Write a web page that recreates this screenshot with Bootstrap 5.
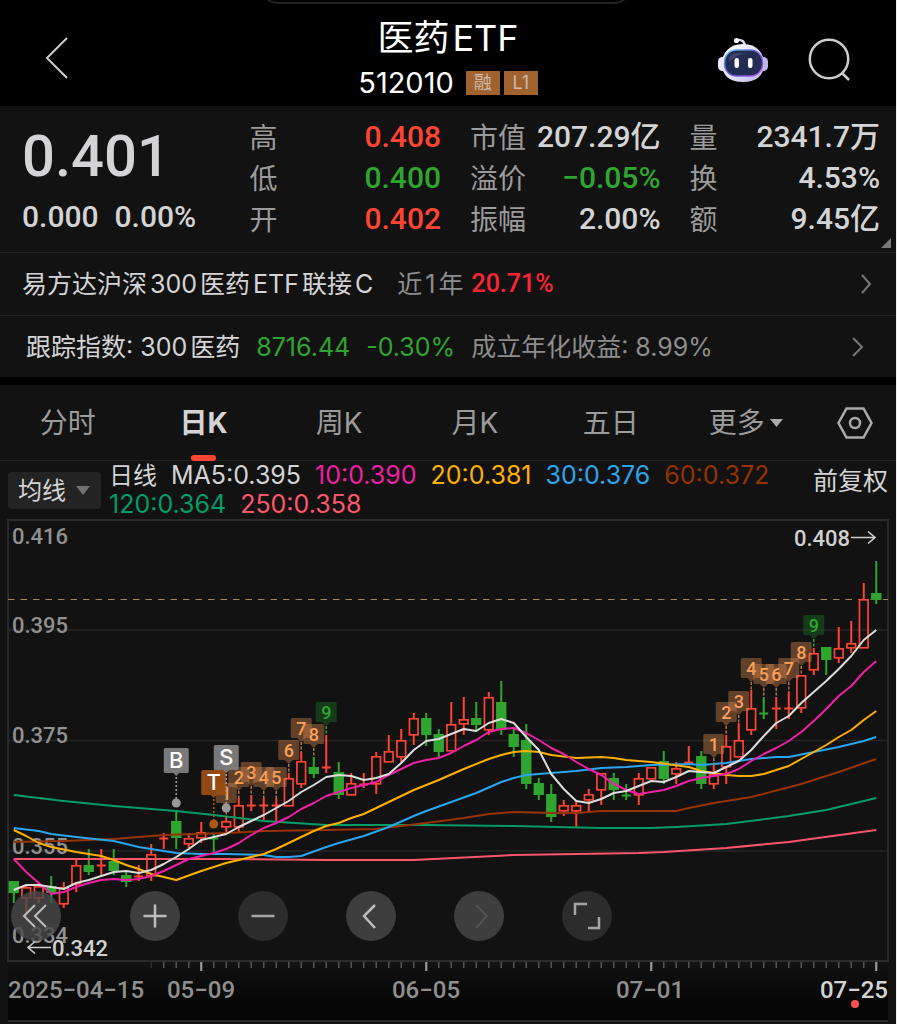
<!DOCTYPE html>
<html lang="zh-CN">
<head>
<meta charset="utf-8">
<meta name="viewport" content="width=device-width, initial-scale=1">
<title>医药ETF 512010</title>
<link href="https://cdn.jsdelivr.net/npm/bootstrap@5.3.0/dist/css/bootstrap.min.css" rel="stylesheet">
<style>
  :root { --panel:#121212; --rule:#232323; --hi:#d4d4d6; --dim:#9b9b9b; --up:#ff4433; --down:#2fa52f; }
  body { background:#000; color:var(--hi); font-family:Inter,"Noto Sans CJK SC",sans-serif; font-size:26px; line-height:1.2; }
  .app { border-right:1px solid #eee; overflow:hidden; }
  .din { font-family:Roboto,"Noto Sans CJK SC",sans-serif; font-weight:500; }
  .panel { background:var(--panel); }
  .bare { background:none; border:0; padding:0; color:inherit; line-height:1; }
  a { color:inherit; text-decoration:none; }
  .up { color:var(--up); } .down { color:var(--down); } .dim { color:var(--dim); }
  .mixed { display:inline-flex; gap:3px; white-space:pre; }

  .topbar { display:grid; grid-template-columns:1fr auto 1fr; height:106px; padding:14px 45px 0 45px; color:#fff; }
  .island { top:-32px; width:372px; height:36px; border:2px solid #222; border-radius:18px; left:50%; margin-left:-188px; }
  .topbar h1 { font-size:36px; font-weight:400; line-height:48px; }
  .code { font-size:29px; line-height:42px; }
  .tag { background:#a0622f; color:#cdbba9; font-size:18px; line-height:24px; width:34px; text-align:center; }

  .quote { display:grid; grid-template-columns:198fr 191fr 190fr 190fr; column-gap:29px; padding:10px 16px 13px 22px; position:relative; border-bottom:1px solid var(--rule); }
  .last { font-size:58px; line-height:80px; }
  .q { font-size:30px; line-height:41px; font-weight:500; }
  .q-label { font-size:28px; font-weight:400; color:var(--dim); font-family:"Noto Sans CJK SC",sans-serif; }
  .fold { right:5px; bottom:4px; }

  .info { height:62px; font-size:25px; padding:0 24px 0 22px; }
  .info + .info { border-top:1px solid var(--rule); }
  .mid { color:#8d8d8d; }

  .tabs { display:grid; grid-template-columns:repeat(6,136fr) 82fr; height:76px; margin-top:8px; border-bottom:1px solid var(--rule); font-size:28px; color:var(--dim); }
  .tabs .bare { height:76px; }
  .tabs .on { color:var(--hi); font-weight:700; position:relative; }
  .tabs .on::after { content:""; position:absolute; left:50%; bottom:0; width:25px; height:6px; margin-left:-13px; border-radius:3px; background:var(--up); }

  .legend { min-height:58px; padding:0 8px; }
  .ma-pick { background:#232323; border-radius:4px; width:93px; height:37px; position:relative; flex:none; margin-top:11px; }
  .ma-pick select { appearance:none; background:none; border:0; color:var(--hi); font-size:24px; line-height:37px; padding:0 0 0 10px; width:100%; height:37px; }
  .ma-pick svg { position:absolute; right:11px; top:14px; pointer-events:none; }
  .ma-list { font-size:25px; line-height:29px; column-gap:14px; }
  .ma-name { font-size:24px; }
  .chart svg.plot { display:block; width:100%; height:auto; }
  .plot text { font-family:Roboto,sans-serif; font-weight:500; font-size:22px; }
  .plot .pin { font-family:Inter,sans-serif; font-weight:500; font-size:22px; fill:#fff; text-anchor:middle; }
  .plot .cnt { font-size:18px; text-anchor:middle; }
  .plot .date { font-size:24px; fill:#8f8f8f; }
  .tools { position:absolute; left:11px; bottom:83px; display:flex; gap:58px; }
  .tools button { width:50px; height:50px; border:0; padding:0; border-radius:50%; background:#3e3e3e; color:#bdbdbd; }
  .tools .far { background:rgba(74,74,74,.8); margin-right:11px; }
  .tools .soft { background:#2c2c2c; color:#a5a5a5; }
  .tools button:disabled { color:#555; }
  .tools svg { display:block; }
</style>
</head>
<body>
<div class="app">
  <header class="topbar position-relative">
    <div class="island position-absolute"></div>
    <div class="d-flex align-items-center pb-1">
      <button class="bare" aria-label="返回"><svg width="24" height="42" viewBox="0 0 24 42" fill="none" stroke="#ccc" stroke-width="2"><path d="M22 1 2 21 22 41"/></svg></button>
    </div>
    <div class="text-center">
      <h1 class="m-0"><span class="mixed"><span>医药</span><span>ETF</span></span></h1>
      <div class="code d-flex align-items-center justify-content-center"><span class="me-2 pe-1">512010</span><span class="tag me-1">融</span><span class="tag">L1</span></div>
    </div>
    <div class="d-flex align-items-center justify-content-end">
      <button class="bare me-4 pe-3" aria-label="智能助手">
        <svg width="50" height="48" viewBox="0 0 50 48">
          <defs>
            <linearGradient id="shell" x1="0" y1="0" x2="1" y2="1"><stop offset="0" stop-color="#fff"/><stop offset=".6" stop-color="#dedcf4"/><stop offset="1" stop-color="#b3aee0"/></linearGradient>
            <linearGradient id="rim" x1="0" y1="0" x2="1" y2="1"><stop offset="0" stop-color="#57c8ea"/><stop offset=".5" stop-color="#6a5bd8"/><stop offset="1" stop-color="#a552ea"/></linearGradient>
          </defs>
          <path d="M19 4q8-1 8 7" fill="none" stroke="#dcdaf2" stroke-width="2.4"/><circle cx="18.500" cy="4.500" r="2.600" fill="#f1f0fb"/>
          <rect x="0" y="21" width="9" height="14" rx="4.500" fill="#e9e8f7"/><rect x="41" y="21" width="9" height="14" rx="4.500" fill="#bdb9e6"/>
          <path d="M25 8C39 8 46 17 46 28S39 46 25 46 4 39 4 28 11 8 25 8Z" fill="url(#shell)"/>
          <rect x="6.500" y="14" width="38" height="26" rx="12" fill="#232c52" stroke="url(#rim)" stroke-width="1.500"/>
          <path d="M11 22q2-5 9-5h9q-10 1-18 9Z" fill="#46507a" opacity=".7"/>
          <rect x="16.500" y="22" width="4.500" height="10" rx="2.200" fill="#fff"/><rect x="30" y="22" width="4.500" height="10" rx="2.200" fill="#fff"/>
        </svg>
      </button>
      <button class="bare" aria-label="搜索"><svg width="43" height="44" viewBox="0 0 43 44" fill="none" stroke="#ccc" stroke-width="2.500"><circle cx="21" cy="21" r="19.200"/><path d="m34 35 7 7"/></svg></button>
    </div>
  </header>

  <section class="quote panel">
    <div class="din">
      <div class="last">0.401</div>
      <div class="q d-flex gap-3"><span>0.000</span><span>0.00%</span></div>
    </div>
    <div class="din q">
      <div class="d-flex justify-content-between"><span class="q-label">高</span><span class="up">0.408</span></div>
      <div class="d-flex justify-content-between"><span class="q-label">低</span><span class="down">0.400</span></div>
      <div class="d-flex justify-content-between"><span class="q-label">开</span><span class="up">0.402</span></div>
    </div>
    <div class="din q">
      <div class="d-flex justify-content-between"><span class="q-label">市值</span><span>207.29亿</span></div>
      <div class="d-flex justify-content-between"><span class="q-label">溢价</span><span class="down">−0.05%</span></div>
      <div class="d-flex justify-content-between"><span class="q-label">振幅</span><span>2.00%</span></div>
    </div>
    <div class="din q">
      <div class="d-flex justify-content-between"><span class="q-label">量</span><span>2341.7万</span></div>
      <div class="d-flex justify-content-between"><span class="q-label">换</span><span>4.53%</span></div>
      <div class="d-flex justify-content-between"><span class="q-label">额</span><span>9.45亿</span></div>
    </div>
    <svg class="fold position-absolute" width="10" height="10"><path d="M10 0V10H0Z" fill="#777"/></svg>
  </section>

  <a href="#fund" class="info panel d-flex align-items-center">
    <span class="mixed"><span>易方达沪深</span><span>300</span><span>医药</span><span>ETF</span><span>联接</span><span>C</span></span><span class="mixed mid ms-4"><span>近</span><span>1</span><span>年</span></span><span class="din ms-2" style="color:#ff2336">20.71%</span>
    <svg class="ms-auto" width="12" height="22" viewBox="0 0 12 22" fill="none" stroke="#777" stroke-width="2"><path d="m2 2 8 9-8 9"/></svg>
  </a>
  <a href="#index" class="info panel d-flex align-items-center">
    <span class="mixed ps-1"><span>跟踪指数: 300</span><span>医药</span></span><span class="down ms-3">8716.44</span><span class="down ms-3">-0.30%</span><span class="mid ms-3">成立年化收益: 8.99%</span>
    <svg class="ms-auto me-2" width="12" height="22" viewBox="0 0 12 22" fill="none" stroke="#777" stroke-width="2"><path d="m1 2 9 9-9 9"/></svg>
  </a>

  <nav class="tabs panel">
    <button class="bare">分时</button>
    <button class="bare on">日K</button>
    <button class="bare">周K</button>
    <button class="bare">月K</button>
    <button class="bare">五日</button>
    <button class="bare d-flex align-items-center justify-content-center">更多<svg class="ms-1" width="15" height="10"><path d="M1 1H14L7.500 9Z" fill="#aaa"/></svg></button>
    <button class="bare" aria-label="设置"><svg width="36" height="32" viewBox="0 0 36 32" fill="none" stroke="#aaa" stroke-width="2.500"><path d="M9.500 1.500H26.500L34.500 16 26.500 30.500H9.500L1.500 16Z"/><circle cx="18" cy="16" r="5"/></svg></button>
  </nav>

  <section class="legend panel d-flex align-items-start">
    <div class="ma-pick me-2"><select aria-label="指标"><option>均线</option></select><svg width="14" height="10"><path d="M0 0H14L7 9Z" fill="#737373"/></svg></div>
    <div class="ma-list d-flex flex-wrap flex-fill">
      <span class="ma-name">日线</span><span>MA5:0.395</span><span style="color:#f020a5">10:0.390</span><span style="color:#ffb000">20:0.381</span><span style="color:#2aa5f0">30:0.376</span><span style="color:#963300">60:0.372</span><span style="color:#009c66">120:0.364</span><span style="color:#ff566c">250:0.358</span>
    </div>
    <button class="bare flex-shrink-0 pt-2" style="font-size:25px">前复权</button>
  </section>

  <section class="chart panel position-relative">
    <svg class="plot" viewBox="0 519 896 505" role="img" aria-label="日K线图">
      <defs><linearGradient id="axisfade" x1="0" y1="0" x2="0" y2="1"><stop offset="0" stop-color="#121212"/><stop offset=".7" stop-color="#060606"/></linearGradient></defs>
      <rect x="8" y="962" width="880" height="58" fill="url(#axisfade)"/>
      <path d="M8 630H888M8 740.500H888M8 851H888" stroke="#262626" stroke-width="1.500"/>
      <path d="M8 520H888V961H8ZM8 1021H888" fill="none" stroke="#2b2b2b" stroke-width="2"/>
      <path d="M8 599.500H888" stroke="#a4875a" stroke-width="1.200" stroke-dasharray="6.500 6"/>
      <g id="candles"></g>
      <g fill="#919191">
        <text x="12" y="544">0.416</text><text x="12" y="633">0.395</text><text x="12" y="743">0.375</text><text x="12" y="854">0.355</text><text x="12" y="943">0.334</text>
      </g>
      <g id="averages" fill="none" stroke-width="2" stroke-linejoin="round"></g>
      <g id="counts"></g>
      <g id="trades"></g>
      <g fill="#d0d0d0" stroke="none">
        <text x="794" y="546">0.408</text><text x="52" y="956">0.342</text>
        <path d="M851 537.500H875M868 531.500l7 6-7 6M51 947.500H28M35 941.500l-7 6 7 6" fill="none" stroke="#d0d0d0" stroke-width="1.600"/>
      </g>
      <g id="ticks"></g>
      <text class="date" x="8" y="998">2025−04−15</text>
      <text class="date" x="201" y="998" text-anchor="middle">05−09</text>
      <text class="date" x="426" y="998" text-anchor="middle">06−05</text>
      <text class="date" x="650" y="998" text-anchor="middle">07−01</text>
      <text class="date" x="888" y="998" text-anchor="end" style="fill:#d4d4d4">07−25</text>
      <circle cx="855" cy="1004" r="4" fill="#ff5252"/>
    </svg>
    <div class="tools">
      <button class="far" aria-label="最早"><svg width="50" height="50" fill="none" stroke="currentColor" stroke-width="2"><path d="M24 14 13 25 24 36M35 14 24 25 35 36"/></svg></button>
      <button aria-label="放大"><svg width="50" height="50" fill="none" stroke="currentColor" stroke-width="2.500"><path d="M13.500 25H36.500M25 13.500V36.500"/></svg></button>
      <button class="soft" aria-label="缩小"><svg width="50" height="50" fill="none" stroke="currentColor" stroke-width="2.500"><path d="M13.500 25H36.500"/></svg></button>
      <button aria-label="向左"><svg width="50" height="50" fill="none" stroke="currentColor" stroke-width="2.500"><path d="M29 14 18 25 29 37"/></svg></button>
      <button disabled aria-label="向右"><svg width="50" height="50" fill="none" stroke="currentColor" stroke-width="2"><path d="M22 14 33 25 22 37"/></svg></button>
      <button class="soft" aria-label="全屏"><svg width="50" height="50" fill="none" stroke="currentColor" stroke-width="2.500"><path d="M13 24V13H25M26 37H37V26"/></svg></button>
    </div>
  </section>
</div>
<script>
const X = i => 13.75 + 12.5 * i;
const RED = '#ff4433', GREEN = '#2fa52f';
const put = (id, html) => { document.getElementById(id).innerHTML = html; };

// one row per trading day: direction, high, body top, body bottom, low
const days = `G 881 881 893 903|R 886 887 898 918|R 882 886 898 903|G 876 886 893 903|R 882 887 904 908|R 860 865 884 892|G 849 865 872 875|R 849 865 865 875|G 849 861 871 875|G 871 875 882 887|R 865 876 876 881|R 844 854 876 881|R 833 838 838 849|G 812 821 838 849|R 833 838 844 848|R 822 832 838 843|G 834 838 838 852|R 817 821 827 832|R 798 805 827 832|R 795 805 805 811|R 798 805 805 820|R 798 805 805 821|R 773 778 806 806|R 752 761 784 788|G 757 767 774 778|R 735 767 767 773|G 762 772 795 799|R 773 783 795 795|R 773 784 784 788|R 752 756 784 794|R 735 751 762 762|R 729 740 757 762|R 713 718 735 745|G 713 718 735 746|G 729 734 752 757|R 702 724 751 751|R 697 719 724 735|G 702 718 725 730|R 692 697 730 735|G 681 702 730 735|G 727 734 747 757|G 724 740 784 789|G 778 783 795 800|G 784 794 817 822|R 800 805 811 816|R 800 805 811 827|R 789 794 800 811|R 773 773 790 805|G 773 778 790 800|G 784 795 795 800|R 773 778 795 805|R 767 767 779 779|G 751 761 779 784|R 762 768 774 784|R 746 762 762 765|G 751 756 784 789|R 765 774 784 789|R 735 746 767 784|R 723 740 757 757|R 690 708 730 735|G 697 713 713 719|R 697 708 708 729|R 692 708 708 719|R 675 675 708 713|R 648 653 670 675|G 647 647 660 675|R 627 648 658 663|R 621 643 648 653|R 583 599 648 648|G 561 593 600 604`
  .split('|').map(r => { const [c, ...v] = r.split(' '); return [c, ...v.map(Number)]; });
put('candles', days.map(([c, h, t, b, l], i) => {
  const x = X(i), col = c === 'R' ? RED : GREEN;
  if (t === b) return `<path d="M${x} ${h}V${l}M${x - 4.5} ${t + .5}h9" stroke="${col}" stroke-width="2" fill="none"/>`;
  if (c === 'G') return `<path d="M${x} ${h}V${l}" stroke="${col}" stroke-width="2"/><rect x="${x - 5.2}" y="${t}" width="10.4" height="${b - t}" fill="${col}"/>`;
  return `<path d="M${x} ${h}V${t}M${x} ${b}V${l}" stroke="${col}" stroke-width="2"/><rect x="${x - 4.3}" y="${t + .8}" width="8.6" height="${b - t - 1}" fill="none" stroke="${col}" stroke-width="1.7"/>`;
}).join(''));

// moving averages as day:height pairs
const lines = {
  '#ff566c': '0:859 10:859 17:859 25:860 32:860 40:855 50:853 52:852 57:848 62:842 69:830',
  '#009c66': '0:795 4:801 8:806 13:811 16:815 20:821 25:825 33:825 40:826 47:828 51:828 53:827 57:824 62:816 65:810 69:798',
  '#963300': '0:842 4:841 8:839 12:835 17:833 20:831 25:830 29:829 31:826 33:823 36:818 38:814 40:812 43:813 45:813 47:811 51:811 53:811 54:808 56:803 59:797 63:784 66:772 69:759',
  '#2aa5f0': '0:828 2:831 3:834 5:837 8:841 9:844 10:847 11:849 13:853 15:854 17:854 20:855 21:857 22:857 23:856 25:847 26:843 28:836 30:827 32:816 33:811 35:802 37:793 39:782 40:778 41:775 43:773 45:771 47:768 49:767 51:765 54:764 55:765 57:763 59:759 61:757 62:757 64:752 66:747 68:741 69:737',
  '#ffb000': '0:830 1:836 2:843 3:847 5:852 7:856 8:860 9:865 10:869 11:874 13:880 15:871 17:863 20:854 21:849 22:843 23:837 24:831 25:826 26:823 27:818 28:814 29:808 30:802 31:796 32:790 33:785 34:780 36:769 38:759 39:755 40:752 41:751 42:752 43:755 45:758 47:757 48:758 49:760 51:762 54:767 55:771 56:773 57:775 58:776 59:776 60:774 61:770 62:766 63:759 64:752 65:745 66:737 67:730 68:720 69:711',
  '#f020a5': '0:859 1:872 2:883 3:894 4:892 5:887 6:883 7:880 8:879 9:880 10:879 11:876 12:871 13:865 14:859 15:856 16:853 17:849 18:843 19:835 20:828 21:823 22:817 23:809 24:803 25:796 26:792 27:788 28:785 29:782 30:775 31:769 32:763 33:760 34:758 35:753 36:746 37:740 38:732 39:729 40:728 41:733 42:740 43:748 44:754 45:762 46:769 47:775 48:784 49:790 50:794 51:792 52:790 53:786 54:781 55:778 56:776 57:774 58:769 59:761 60:754 61:748 62:741 63:732 64:721 65:709 66:696 67:686 68:672 69:661',
  '#dcdcdc': '0:890 1:885 2:885 3:887 4:889 5:883 6:880 8:872 9:871 10:873 11:870 12:864 13:857 14:849 15:840 16:837 17:834 18:827 19:821 20:815 21:808 22:801 23:792 24:785 25:777 26:775 27:776 28:780 29:778 30:774 31:763 32:750 33:741 34:739 35:734 36:729 37:731 38:723 39:719 40:723 41:737 42:750 43:774 44:789 45:801 46:803 47:799 48:793 49:791 50:786 51:781 52:782 53:777 54:771 55:772 56:773 57:767 58:761 59:750 60:736 61:723 62:716 63:703 64:692 65:681 66:669 67:656 68:640 69:630'
};
put('averages', Object.entries(lines).map(([c, s]) =>
  `<polyline stroke="${c}" points="${s.split(' ').map(p => { const [i, y] = p.split(':'); return X(+i) + ',' + y; }).join(' ')}"/>`).join(''));

// sequential count flags: day, number, top
const flags = [[17,1,783],[18,2,767],[19,3,762],[20,4,767],[21,5,767],[22,6,740],[23,7,718],[24,8,724],[25,9,702],
  [56,1,734],[57,2,702],[58,3,691],[59,4,658],[60,5,664],[61,6,664],[62,7,658],[63,8,642],[64,9,615]];
put('counts', flags.map(([i, n, y]) => {
  const x = X(i), g = n === 9, fg = g ? '#2fa52f' : '#ffa05a';
  return `<path d="M${x} ${y + 24}V${days[i][1]}" stroke="${g ? '#2fa52f' : '#b07040'}" stroke-width="1.5" stroke-dasharray="3 1.5"/>
  <path d="M${x - 9} ${y}h18q1.500 0 1.500 1.500v17q0 1.500-1.500 1.500h-5l-4 4-4-4h-5q-1.500 0-1.500-1.500v-17q0-1.500 1.500-1.500Z" fill="${g ? '#1f7a28' : '#d98a50'}" fill-opacity=".4"/>
  <text class="cnt" x="${x}" y="${y + 17}" fill="${fg}">${n}</text>`;
}).join(''));

// trade pins: day, letter, top, dot height, flag colour, dot colour
put('trades', [[16,'T',770,824,'#9a4d12','#a85a1a'],[13,'B',748,803,'#808080','#999'],[17,'S',745,808,'#808080','#999']].map(([i, s, y, d, f, c]) => {
  const x = X(i);
  return `<path d="M${x} ${y + 29}V${d}" stroke="${c}" stroke-width="1.6" stroke-dasharray="2 2"/><circle cx="${x}" cy="${d}" r="4.500" fill="${c}"/>
  <path d="M${x - 11} ${y}h22q1.500 0 1.500 1.500v22q0 1.500-1.500 1.500h-8l-3 3-3-3h-8q-1.500 0-1.500-1.500v-22q0-1.500 1.500-1.500Z" fill="${f}" fill-opacity=".94"/>
  <text class="pin" x="${x}" y="${y + 20}">${s}</text>`;
}).join(''));

let ticks = '';
for (let i = 11; i < 70; i++) {
  const major = (i - 15) % 18 === 0;
  ticks += `<path d="M${X(i)} 962v${major ? 9 : 6}" stroke="${major ? '#999' : i < 12 ? '#2a2a2a' : '#555'}" stroke-width="${major ? 2.2 : 1.5}"/>`;
}
put('ticks', ticks);
</script>
<script src="https://cdn.jsdelivr.net/npm/bootstrap@5.3.0/dist/js/bootstrap.bundle.min.js"></script>
</body>
</html>
